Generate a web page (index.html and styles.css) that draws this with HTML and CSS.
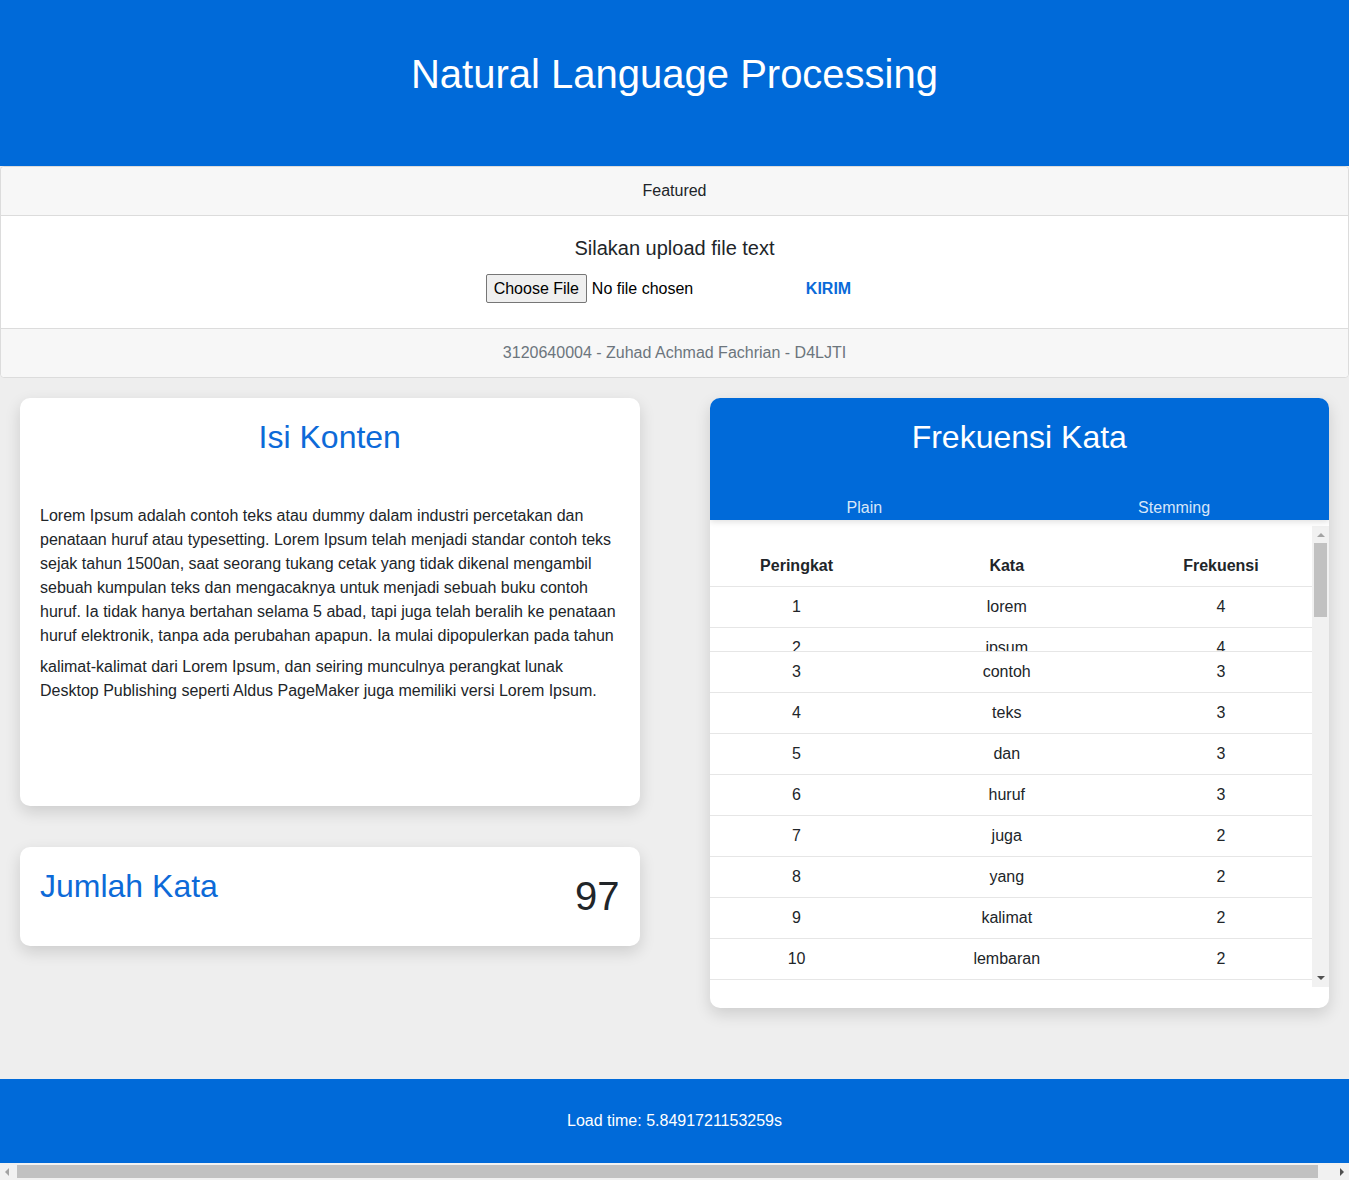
FILE: index.html
```html
<!DOCTYPE html>
<html lang="id">
<head>
<meta charset="utf-8">
<title>Natural Language Processing</title>
<link rel="stylesheet" href="styles.css">
</head>
<body>
<header class="hero">
  <h1 class="hero-title">Natural Language Processing</h1>
</header>

<section class="upload-card">
  <div class="upload-head">Featured</div>
  <div class="upload-body">
    <h5 class="upload-title">Silakan upload file text</h5>
    <form class="upload-form">
      <label class="file-field">
        <span class="file-btn">Choose File</span>
        <span class="file-name">No file chosen</span>
        <input class="file-input" type="file" name="file">
      </label>
      <button class="send-btn" type="button">KIRIM</button>
    </form>
  </div>
  <div class="upload-foot">3120640004 - Zuhad Achmad Fachrian - D4LJTI</div>
</section>

<main class="content">
  <div class="col-left">
    <article class="panel content-panel">
      <h2 class="panel-title center">Isi Konten</h2>
      <p class="lorem">Lorem Ipsum adalah contoh teks atau dummy dalam industri percetakan dan penataan huruf atau typesetting. Lorem Ipsum telah menjadi standar contoh teks sejak tahun 1500an, saat seorang tukang cetak yang tidak dikenal mengambil sebuah kumpulan teks dan mengacaknya untuk menjadi sebuah buku contoh huruf. Ia tidak hanya bertahan selama 5 abad, tapi juga telah beralih ke penataan huruf elektronik, tanpa ada perubahan apapun. Ia mulai dipopulerkan pada tahun</p>
      <p class="lorem lorem-next">kalimat-kalimat dari Lorem Ipsum, dan seiring munculnya perangkat lunak Desktop Publishing seperti Aldus PageMaker juga memiliki versi Lorem Ipsum.</p>
    </article>
    <article class="panel count-panel">
      <h2 class="panel-title">Jumlah Kata</h2>
      <div class="count-value">97</div>
    </article>
  </div>

  <article class="panel freq-panel">
    <div class="freq-head">
      <h2 class="freq-title">Frekuensi Kata</h2>
      <nav class="freq-tabs">
        <span class="freq-tab">Plain</span>
        <span class="freq-tab">Stemming</span>
      </nav>
    </div>
    <div class="freq-scroll">
      <div class="freq-table-wrap">
        <table class="freq-table">
          <colgroup>
            <col class="c1"><col class="c2"><col class="c3">
          </colgroup>
          <thead>
            <tr><th>Peringkat</th><th>Kata</th><th>Frekuensi</th></tr>
          </thead>
          <tbody>
            <tr><td>1</td><td>lorem</td><td>4</td></tr>
            <tr class="cut"><td><div class="clip">2</div></td><td><div class="clip">ipsum</div></td><td><div class="clip">4</div></td></tr>
            <tr><td>3</td><td>contoh</td><td>3</td></tr>
            <tr><td>4</td><td>teks</td><td>3</td></tr>
            <tr><td>5</td><td>dan</td><td>3</td></tr>
            <tr><td>6</td><td>huruf</td><td>3</td></tr>
            <tr><td>7</td><td>juga</td><td>2</td></tr>
            <tr><td>8</td><td>yang</td><td>2</td></tr>
            <tr><td>9</td><td>kalimat</td><td>2</td></tr>
            <tr><td>10</td><td>lembaran</td><td>2</td></tr>
          </tbody>
        </table>
      </div>
      <div class="vbar">
        <span class="arrow-up"></span>
        <span class="vthumb"></span>
        <span class="vbar-fill"></span>
        <span class="arrow-down"></span>
      </div>
    </div>
  </article>
</main>

<footer class="site-footer">Load time: 5.8491721153259s</footer>

<div class="hbar">
  <span class="arrow-left"></span>
  <span class="hthumb"></span>
  <span class="arrow-right"></span>
</div>
</body>
</html>
```

FILE: styles.css
```css
* { box-sizing: border-box; }

html, body {
  margin: 0;
  padding: 0;
}

body {
  background: #eeeeee;
  font-family: "Liberation Sans", Arial, sans-serif;
  font-size: 16px;
  line-height: 24px;
  color: #212529;
  overflow: hidden;
}

/* Hero */
.hero {
  background: #006ad9;
  height: 166px;
  padding-top: 50px;
}
.hero-title {
  margin: 0;
  font-size: 40px;
  line-height: 48px;
  font-weight: 400;
  color: #ffffff;
  text-align: center;
}

/* Upload card */
.upload-card {
  background: #ffffff;
  border: 1px solid #dcdcdc;
  border-radius: 4px;
  text-align: center;
}
.upload-head {
  background: #f7f7f7;
  padding: 12px 20px;
  border-bottom: 1px solid #dcdcdc;
  border-radius: 4px 4px 0 0;
}
.upload-body {
  padding: 20px 20px 23px;
}
.upload-title {
  margin: 0 0 12px;
  font-size: 20px;
  line-height: 24px;
  font-weight: 400;
}
.upload-form {
  height: 33px;
  display: flex;
  justify-content: center;
  align-items: center;
}
.file-field {
  width: 308px;
  display: flex;
  align-items: center;
  gap: 5px;
  text-align: left;
}
.file-btn {
  display: inline-block;
  height: 29px;
  padding: 0 6px;
  line-height: 27px;
  background: #efefef;
  border: 1px solid #767676;
  border-radius: 2px;
  color: #000;
  width: 101px;
  text-align: center;
}
.file-name {
  color: #000;
}
.file-input {
  display: none;
}
.send-btn {
  background: none;
  border: 0;
  padding: 6px 12px;
  font-family: inherit;
  font-size: 16px;
  line-height: 24px;
  font-weight: 700;
  color: #0a6ad9;
  cursor: pointer;
}
.upload-foot {
  background: #f7f7f7;
  padding: 12px 20px;
  border-top: 1px solid #dcdcdc;
  color: #6c757d;
  border-radius: 0 0 4px 4px;
}

/* Content */
.content {
  display: grid;
  grid-template-columns: 1fr 1fr;
  column-gap: 70px;
  padding: 20px 20px 71px;
  align-items: start;
}
.col-left {
  display: flex;
  flex-direction: column;
  gap: 41px;
}
.panel {
  background: #ffffff;
  border-radius: 10px;
  box-shadow: 0 6px 16px rgba(0, 0, 0, 0.14);
}
.panel-title {
  margin: 0;
  font-size: 32px;
  line-height: 38px;
  font-weight: 400;
  color: #0d6ad8;
}
.center { text-align: center; }

.content-panel {
  height: 408px;
  padding: 20px;
}
.content-panel .panel-title {
  margin-bottom: 48px;
}
.lorem {
  margin: 0;
  font-size: 16px;
  line-height: 24px;
}
.lorem-next {
  margin-top: 7px;
}

.count-panel {
  height: 99px;
  padding: 20px;
  display: flex;
  justify-content: space-between;
  align-items: flex-start;
}
.count-value {
  margin-top: 5px;
  font-size: 40px;
  line-height: 48px;
  color: #212529;
}

/* Frequency panel */
.freq-panel {
  overflow: hidden;
  padding-bottom: 21px;
}
.freq-head {
  position: relative;
  z-index: 1;
  background: #006ad9;
  padding-top: 20px;
  height: 122px;
  box-shadow: 0 2px 6px rgba(0, 0, 0, 0.12);
}
.freq-title {
  margin: 0;
  font-size: 32px;
  line-height: 38px;
  font-weight: 400;
  color: #ffffff;
  text-align: center;
}
.freq-tabs {
  display: flex;
  margin-top: 40px;
}
.freq-tab {
  flex: 1;
  text-align: center;
  color: rgba(255, 255, 255, 0.85);
  line-height: 24px;
}
.freq-scroll {
  margin-top: 6px;
  height: 461px;
  display: flex;
}
.freq-table-wrap {
  flex: 1;
  overflow: hidden;
  padding-top: 20px;
}
.freq-table {
  width: 100%;
  table-layout: fixed;
  border-collapse: collapse;
}
.freq-table .c1 { width: 174px; }
.freq-table .c2 { width: 246px; }
.freq-table .c3 { width: 182px; }
.freq-table th,
.freq-table td {
  padding: 8px;
  text-align: center;
  line-height: 24px;
  border-bottom: 1px solid #e6e6e6;
}
.freq-table th {
  font-weight: 700;
}
.freq-table tr.cut td {
  padding-bottom: 0;
}
.clip {
  height: 15px;
  overflow: hidden;
}

/* Fake vertical scrollbar */
.vbar {
  width: 17px;
  background: #f1f1f1;
  display: flex;
  flex-direction: column;
  align-items: center;
}
.arrow-up,
.arrow-down {
  width: 0;
  height: 0;
  border-left: 4px solid transparent;
  border-right: 4px solid transparent;
}
.arrow-up {
  margin-top: 7px;
  border-bottom: 4px solid #a3a3a3;
}
.arrow-down {
  margin-bottom: 7px;
  border-top: 4px solid #505050;
}
.vthumb {
  margin-top: 6px;
  width: 13px;
  height: 74px;
  background: #c1c1c1;
}
.vbar-fill {
  flex: 1;
}

/* Footer */
.site-footer {
  background: #006ad9;
  color: #ffffff;
  text-align: center;
  padding: 30px 0;
  line-height: 24px;
}

/* Fake horizontal scrollbar */
.hbar {
  height: 17px;
  background: #f1f1f1;
  display: flex;
  align-items: center;
}
.arrow-left,
.arrow-right {
  width: 0;
  height: 0;
  border-top: 4px solid transparent;
  border-bottom: 4px solid transparent;
}
.arrow-left {
  margin: 0 6px 0 5px;
  border-right: 4px solid #a3a3a3;
}
.arrow-right {
  margin: 0 5px 0 auto;
  border-left: 4px solid #505050;
}
.hthumb {
  width: 1301px;
  height: 13px;
  background: #c1c1c1;
  margin-left: 2px;
}
```
